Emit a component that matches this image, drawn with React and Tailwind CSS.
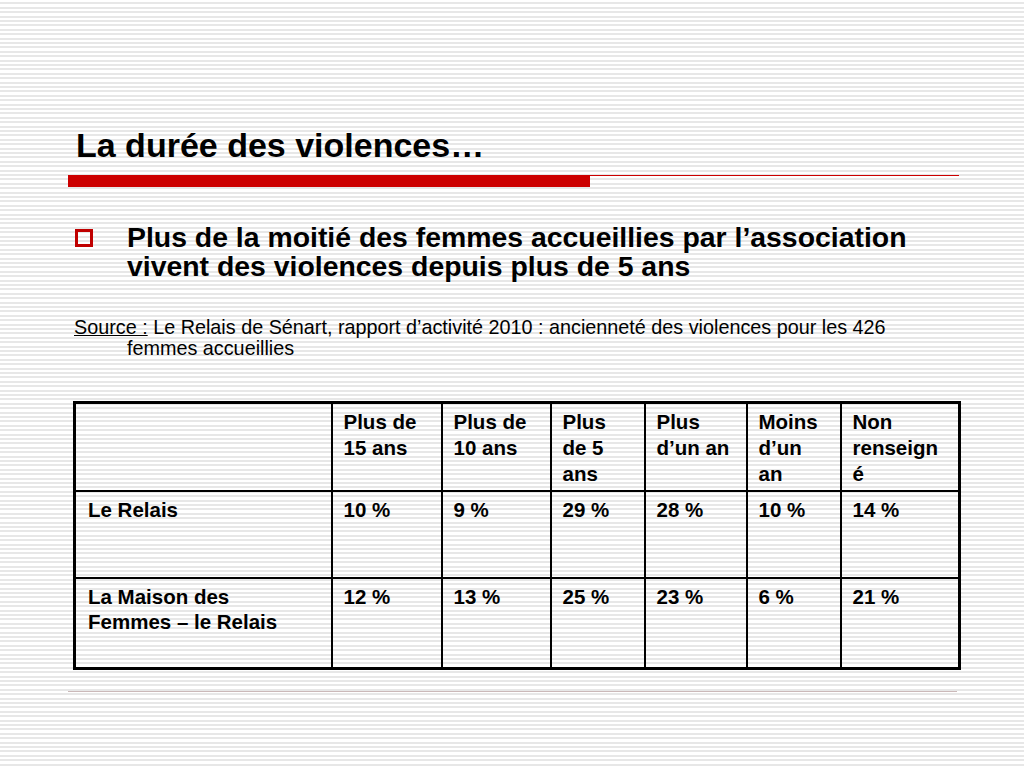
const headers = [
  ["Plus de", "15 ans"],
  ["Plus de", "10 ans"],
  ["Plus", "de 5", "ans"],
  ["Plus", "d’un an"],
  ["Moins", "d’un", "an"],
  ["Non", "renseign", "é"],
];

const rows = [
  { label: ["Le Relais"], values: ["10 %", "9 %", "29 %", "28 %", "10 %", "14 %"], h: "h-[87px]" },
  {
    label: ["La Maison des", "Femmes – le Relais"],
    values: ["12 %", "13 %", "25 %", "23 %", "6 %", "21 %"],
    h: "h-[91px]",
  },
];

const colWidths = ["w-[257px]", "w-[110px]", "w-[109px]", "w-[94px]", "w-[102px]", "w-[94px]", "w-[119px]"];

function Lines({ lines }) {
  return lines.map((l, i) => (
    <span key={i}>
      {i > 0 && <br />}
      {l}
    </span>
  ));
}

export default function App() {
  return (
    <div className="w-[1024px] h-[768px] overflow-hidden bg-white bg-[image:repeating-linear-gradient(180deg,#ffffff_0px,#ffffff_2.4px,#e7e7e7_2.4px,#e7e7e7_4.4px)] font-['Liberation_Sans',Arial,sans-serif] text-black pt-[125px]">
      {/* Titre */}
      <h1 className="ml-[76px] text-[34px] leading-[40px] font-bold">La durée des violences…</h1>

      {/* Barre rouge */}
      <div className="mt-[10px] ml-[68px] w-[891px] flex items-start">
        <div className="w-[522px] h-[12px] bg-[#cc0000]" />
        <div className="flex-1 h-px bg-[#cc0000]" />
      </div>

      {/* Puce */}
      <div className="mt-[36px] ml-[75px] flex items-start">
        <span className="mt-[6px] w-[18px] h-[18px] shrink-0 border-[3px] border-[#c00000]" />
        <p className="ml-[34px] text-[28.4px] leading-[29px] font-bold whitespace-nowrap">
          Plus de la moitié des femmes accueillies par l’association
          <br />
          vivent des violences depuis plus de 5 ans
        </p>
      </div>

      {/* Source */}
      <p className="mt-[36px] ml-[74px] pl-[53px] indent-[-53px] text-[19.8px] leading-[21px] whitespace-nowrap">
        <span className="underline">Source :</span> Le Relais de Sénart, rapport d’activité 2010 : ancienneté des
        violences pour les 426
        <br />
        femmes accueillies
      </p>

      {/* Tableau */}
      <table className="mt-[42px] ml-[73px] w-[886px] table-fixed border-collapse border-[3px] border-black text-[20.5px] leading-[26px] font-bold">
        <colgroup>
          {colWidths.map((w, i) => (
            <col key={i} className={w} />
          ))}
        </colgroup>
        <tbody>
          <tr className="h-[88px]">
            <td className="border-2 border-black" />
            {headers.map((h, i) => (
              <td key={i} className="border-2 border-black align-top pl-[11px] pt-[5px] whitespace-nowrap">
                <Lines lines={h} />
              </td>
            ))}
          </tr>
          {rows.map((r, ri) => (
            <tr key={ri} className={r.h}>
              <td className="border-2 border-black align-top pl-[12px] pt-[5px] leading-[25px] whitespace-nowrap">
                <Lines lines={r.label} />
              </td>
              {r.values.map((v, i) => (
                <td key={i} className="border-2 border-black align-top pl-[11px] pt-[5px]">
                  {v}
                </td>
              ))}
            </tr>
          ))}
        </tbody>
      </table>

      {/* Ligne du bas */}
      <div className="mt-[21px] ml-[68px] w-[889px] h-px bg-[#cbb9b9]" />
    </div>
  );
}
